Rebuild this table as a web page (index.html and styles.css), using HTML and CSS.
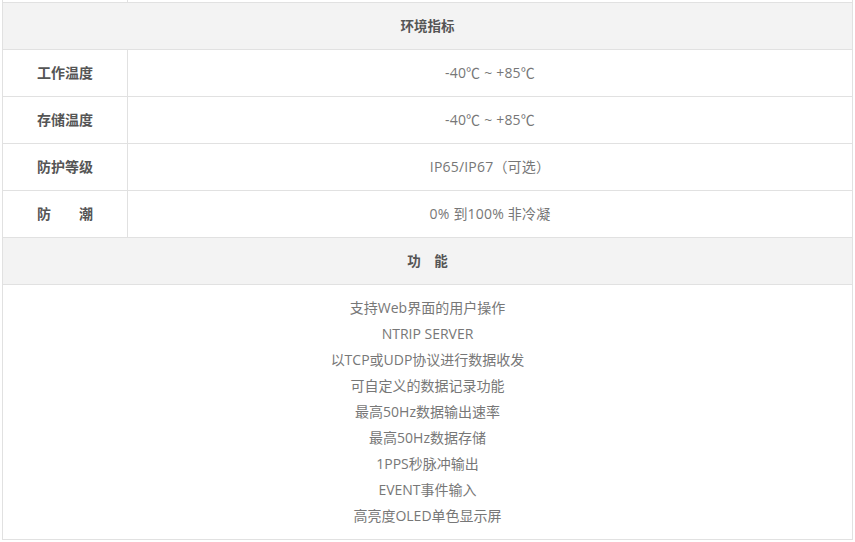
FILE: index.html
```html
<!DOCTYPE html>
<html lang="zh-CN">
<head>
<meta charset="utf-8">
<link rel="stylesheet" href="styles.css">
</head>
<body>
<table class="spec">
  <colgroup><col class="c-label"><col class="c-value"></colgroup>
  <tr class="row prev"><td class="label"></td><td class="value"></td></tr>
  <tr class="row section"><th colspan="2">环境指标</th></tr>
  <tr class="row"><td class="label">工作温度</td><td class="value">-40℃ ~ +85℃</td></tr>
  <tr class="row"><td class="label">存储温度</td><td class="value">-40℃ ~ +85℃</td></tr>
  <tr class="row"><td class="label">防护等级</td><td class="value">IP65/IP67（可选）</td></tr>
  <tr class="row"><td class="label">防&emsp;&emsp;潮</td><td class="value">0% 到100% 非冷凝</td></tr>
  <tr class="row section"><th colspan="2">功&emsp;能</th></tr>
  <tr class="features">
    <td colspan="2">
      <p>支持Web界面的用户操作</p>
      <p>NTRIP SERVER</p>
      <p>以TCP或UDP协议进行数据收发</p>
      <p>可自定义的数据记录功能</p>
      <p>最高50Hz数据输出速率</p>
      <p>最高50Hz数据存储</p>
      <p>1PPS秒脉冲输出</p>
      <p>EVENT事件输入</p>
      <p>高亮度OLED单色显示屏</p>
    </td>
  </tr>
</table>
</body>
</html>
```

FILE: styles.css
```css
html, body {
  margin: 0;
  padding: 0;
  background: #fff;
}
body {
  padding-left: 2px;
  font-family: "Open Sans", "Noto Sans CJK SC", sans-serif;
  font-size: 14px;
  color: #777;
  overflow: hidden;
}
.spec {
  border-collapse: collapse;
  width: 851px;
  margin-top: -45px;
  table-layout: fixed;
}
.c-label { width: 125px; }
.spec td, .spec th {
  border: 1px solid #e1e1e1;
  padding: 0 0 3px;
  text-align: center;
  vertical-align: middle;
}
.row { height: 47px; }
.section th {
  background: #f3f3f3;
  font-family: "Noto Sans CJK SC", sans-serif;
  font-weight: bold;
  font-size: 13.5px;
  color: #555;
}
.label {
  font-family: "Noto Sans CJK SC", sans-serif;
  font-weight: bold;
  font-size: 14px;
  color: #555;
}
.value {
  color: #777;
  letter-spacing: 0.2px;
}
.features td {
  padding: 10px 0 10px;
}
.features p {
  margin: 0;
  line-height: 26px;
}
```
